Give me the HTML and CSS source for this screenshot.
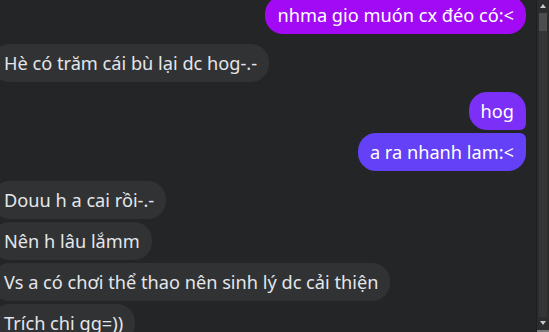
FILE: index.html
```html
<!DOCTYPE html>
<html lang="vi">
  <head>
    <meta charset="UTF-8" />
    <meta name="viewport" content="width=device-width, initial-scale=1.0" />
    <title>Chat</title>
    <link rel="stylesheet" href="styles.css">
  </head>
  <body>
    <div class="window">
      <div class="chat">
        <div class="group mine">
          <div class="bubble first">nhma gio muón cx đéo có:&lt;</div>
        </div>
        <div class="group theirs">
          <div class="bubble">Hè có trăm cái bù lại dc hog-.-</div>
        </div>
        <div class="group mine">
          <div class="bubble top hog">hog</div>
          <div class="bubble bottom lam">a ra nhanh lam:&lt;</div>
        </div>
        <div class="group theirs">
          <div class="bubble">Douu h a cai rồi-.-</div>
          <div class="bubble">Nên h lâu lắmm</div>
          <div class="bubble">Vs a có chơi thể thao nên sinh lý dc cải thiện</div>
          <div class="bubble">Trích chi gg=))</div>
        </div>
      </div>
      <div class="scrollbar">
        <div class="arrow up"></div>
        <div class="thumb"></div>
        <div class="track"></div>
        <div class="arrow down"></div>
      </div>
    </div>
  </body>
</html>
```

FILE: styles.css
```css
:root {
  --bg: #242526;
  --gray-bubble: #313233;
  --text: #e4e6eb;
}
html, body {
  margin: 0;
  padding: 0;
  height: 100%;
  overflow: hidden;
  background-color: var(--bg);
  font-family: "Noto Sans", "Open Sans", Arial, sans-serif;
}
.window {
  display: flex;
  height: 332px;
}
.chat {
  flex: 1;
  display: flex;
  flex-direction: column;
  gap: 10px;
  margin-top: -4px;
  padding-right: 10px;
}
.group {
  display: flex;
  flex-direction: column;
  gap: 3px;
}
.group.mine {
  align-items: flex-end;
}
.group.theirs {
  align-items: flex-start;
  margin-left: -8px;
}
.bubble {
  font-size: 18.2px;
  line-height: 22px;
  padding: 8px 12px;
  border-radius: 18px;
  color: var(--text);
  background-color: var(--gray-bubble);
  white-space: nowrap;
}
.mine .bubble {
  color: #fff;
}
.first {
  background-color: #a20af6;
}
.hog {
  background-color: #7b2ff7;
}
.lam {
  background-color: #6440f6;
}
.top {
  border-bottom-right-radius: 6px;
}
.bottom {
  border-top-right-radius: 6px;
}
.scrollbar {
  width: 12px;
  display: flex;
  flex-direction: column;
  background-color: #2c2c2c;
  border-left: 1px solid #1e1e1e;
}
.thumb {
  height: 18px;
  margin: 0 2px;
  background-color: #4d4d4d;
}
.track {
  flex: 1;
  margin: 0 2px;
  background-color: #353535;
}
.arrow {
  height: 13px;
  position: relative;
}
.arrow::after {
  content: "";
  position: absolute;
  left: 3px;
  border-left: 3px solid transparent;
  border-right: 3px solid transparent;
}
.arrow.up::after {
  top: 4px;
  border-bottom: 4px solid #c8c8c8;
}
.arrow.down::after {
  top: 4px;
  border-top: 4px solid #c8c8c8;
}
.arrow.down {
  border-bottom: 2px solid #7a7a7a;
}
```
